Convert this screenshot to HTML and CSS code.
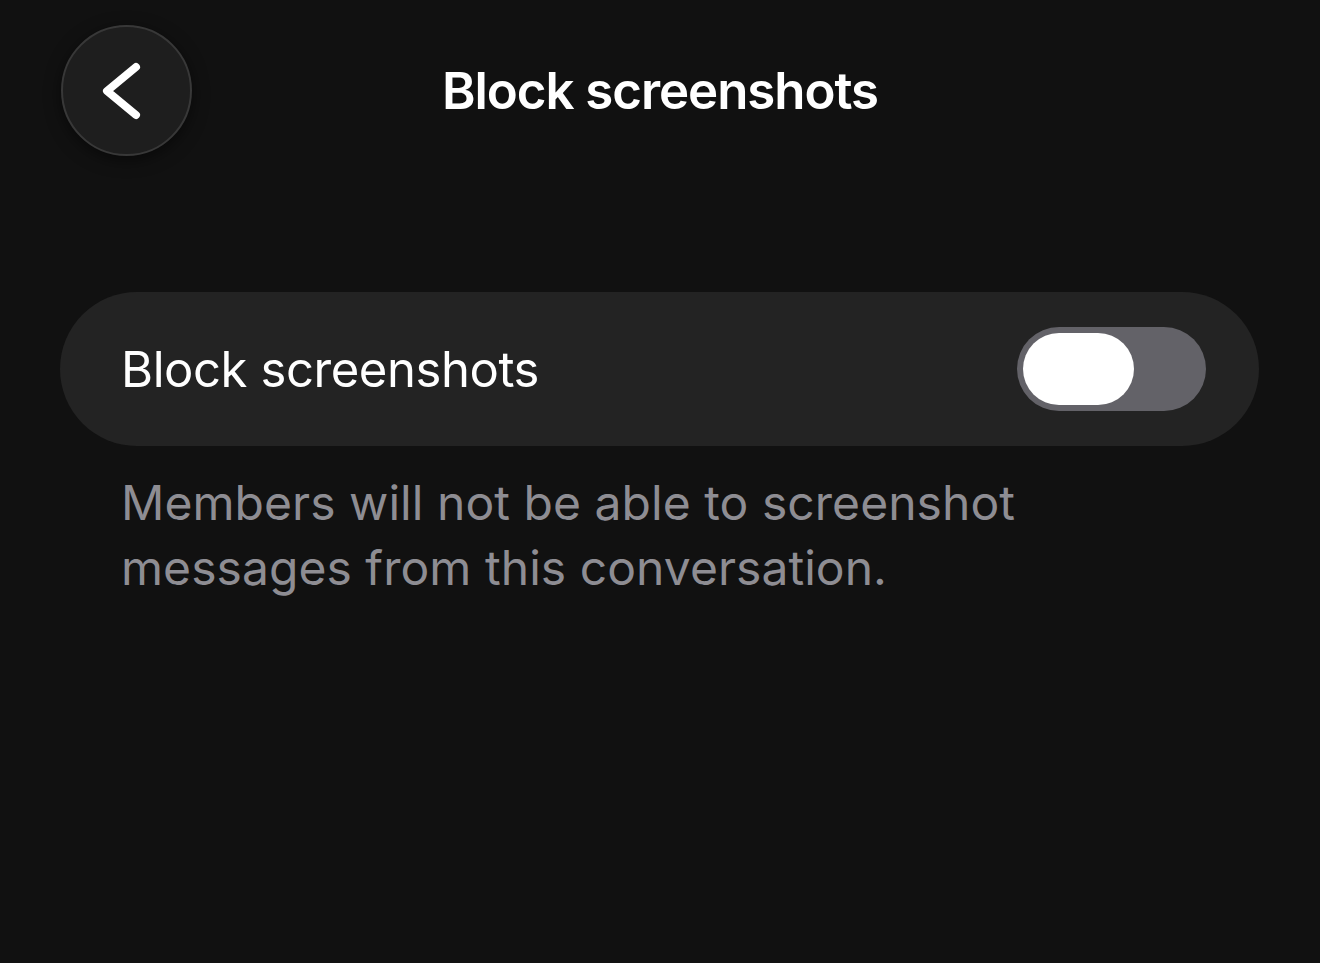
FILE: index.html
```html
<!DOCTYPE html>
<html lang="en">
<head>
<meta charset="utf-8">
<title>Block screenshots</title>
<link rel="stylesheet" href="styles.css">
</head>
<body>
<header class="topbar">
  <div class="topbar-left">
    <button class="back-btn" aria-label="Back">
      <svg width="131" height="131" viewBox="0 0 131 131">
        <path d="M75 42 L46 66 L75 90" fill="none" stroke="#ffffff" stroke-width="8" stroke-linecap="round" stroke-linejoin="round"/>
      </svg>
    </button>
  </div>
  <h1 class="title">Block screenshots</h1>
  <div class="topbar-right"></div>
</header>
<main class="content">
  <section class="card">
    <span class="card-label">Block screenshots</span>
    <div class="toggle"><div class="knob"></div></div>
  </section>
  <p class="desc">Members will not be able to screenshot<br>messages from this conversation.</p>
</main>
</body>
</html>
```
FILE: styles.css
```css
html, body {
  margin: 0;
  padding: 0;
  background: #111111;
  height: 100%;
}
body {
  font-family: Inter, "Noto Sans", "Liberation Sans", sans-serif;
  color: #ffffff;
  overflow: hidden;
}
.topbar {
  display: grid;
  grid-template-columns: 1fr auto 1fr;
  align-items: center;
  padding: 25px 61px 0 61px;
}
.topbar-left {
  display: flex;
}
.back-btn {
  width: 131px;
  height: 131px;
  border-radius: 50%;
  background: #1e1e1e;
  border: 2px solid #383838;
  box-sizing: border-box;
  padding: 0;
  margin: 0;
  display: flex;
  align-items: center;
  justify-content: center;
  box-shadow: 0 4px 16px rgba(0,0,0,0.5);
}
.back-btn svg {
  display: block;
  flex: none;
}
.title {
  margin: 0;
  font-size: 51px;
  font-weight: 600;
  letter-spacing: -1.05px;
  text-align: center;
  line-height: 1;
}
.content {
  padding: 136px 61px 0 60px;
}
.card {
  background: #232323;
  border-radius: 77px;
  height: 154px;
  box-sizing: border-box;
  display: flex;
  align-items: center;
  justify-content: space-between;
  padding: 0 53px 0 61px;
}
.card-label {
  font-size: 49px;
  font-weight: 400;
  letter-spacing: -0.42px;
}
.toggle {
  width: 189px;
  height: 84px;
  border-radius: 42px;
  background: #636268;
  box-sizing: border-box;
  padding: 6px;
  display: flex;
}
.knob {
  width: 111px;
  height: 72px;
  border-radius: 36px;
  background: #ffffff;
}
.desc {
  margin: 24px 0 0 0;
  padding-left: 61px;
  font-size: 48px;
  line-height: 65px;
  color: #8e8d93;
  letter-spacing: 0.05px;
}
```
